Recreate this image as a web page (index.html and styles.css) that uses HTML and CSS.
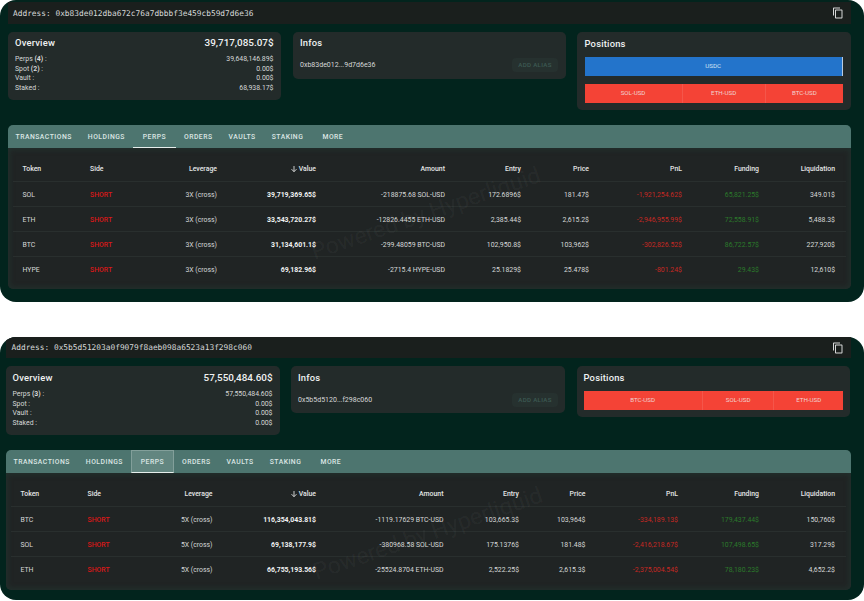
FILE: index.html
```html
<!DOCTYPE html>
<html lang="en">

<head>
    <meta charset="UTF-8">
    <meta name="viewport" content="width=device-width, initial-scale=1.0">
    <title>Address Explorer</title>
    <link rel="stylesheet" href="styles.css">
</head>

<body>
    <section class="account first">
        <header class="address-bar">
            <span class="address">Address: 0xb83de012dba672c76a7dbbbf3e459cb59d7d6e36</span>
            <svg class="copy" viewBox="0 0 24 24"><path d="M16 1H4c-1.1 0-2 .9-2 2v14h2V3h12V1zm3 4H8c-1.1 0-2 .9-2 2v14c0 1.1.9 2 2 2h11c1.1 0 2-.9 2-2V7c0-1.1-.9-2-2-2zm0 16H8V7h11v14z"/></svg>
        </header>

        <div class="cards">
            <div class="card overview">
                <div class="title"><span>Overview</span><span class="total">39,717,085.07$</span></div>
                <div class="line"><span>Perps <b>(4)</b> :</span><span>39,648,146.89$</span></div>
                <div class="line"><span>Spot <b>(2)</b> :</span><span>0.00$</span></div>
                <div class="line"><span>Vault :</span><span>0.00$</span></div>
                <div class="line"><span>Staked :</span><span>68,938.17$</span></div>
            </div>
            <div class="card infos">
                <div class="title">Infos</div>
                <div class="alias"><span>0xb83de012...9d7d6e36</span><button>ADD ALIAS</button></div>
            </div>
            <div class="card positions">
                <div class="title">Positions</div>
                <div class="bar spot"><span>USDC</span></div>
                <div class="bar perps">
                    <span style="flex-grow: 98">SOL-USD</span>
                    <span style="flex-grow: 83">ETH-USD</span>
                    <span style="flex-grow: 78">BTC-USD</span>
                </div>
            </div>
        </div>

        <nav class="tabs">
            <a>TRANSACTIONS</a>
            <a>HOLDINGS</a>
            <a class="active">PERPS</a>
            <a>ORDERS</a>
            <a>VAULTS</a>
            <a>STAKING</a>
            <a>MORE</a>
        </nav>
        <div class="panel">
            <div class="watermark">Powered by Hyperliquid</div>
            <table>
                <thead>
                    <tr><th>Token</th><th>Side</th><th>Leverage</th><th><svg class="sort" viewBox="0 0 24 24"><path d="M12 3v17M4.5 12.5L12 20l7.5-7.5"/></svg>Value</th><th>Amount</th><th>Entry</th><th>Price</th><th>PnL</th><th>Funding</th><th>Liquidation</th></tr>
                </thead>
                <tbody>
                    <tr><td>SOL</td><td class="short">SHORT</td><td>3X (cross)</td><td class="value">39,719,369.65$</td><td>-218875.68 SOL-USD</td><td>172.6896$</td><td>181.47$</td><td class="loss">-1,921,254.62$</td><td class="gain">65,821.25$</td><td>349.01$</td></tr>
                    <tr><td>ETH</td><td class="short">SHORT</td><td>3X (cross)</td><td class="value">33,543,720.27$</td><td>-12826.4455 ETH-USD</td><td>2,385.44$</td><td>2,615.2$</td><td class="loss">-2,946,955.99$</td><td class="gain">72,558.91$</td><td>5,488.3$</td></tr>
                    <tr><td>BTC</td><td class="short">SHORT</td><td>3X (cross)</td><td class="value">31,134,601.1$</td><td>-299.48059 BTC-USD</td><td>102,950.8$</td><td>103,962$</td><td class="loss">-302,826.52$</td><td class="gain">86,722.57$</td><td>227,920$</td></tr>
                    <tr><td>HYPE</td><td class="short">SHORT</td><td>3X (cross)</td><td class="value">69,182.96$</td><td>-2715.4 HYPE-USD</td><td>25.1829$</td><td>25.478$</td><td class="loss">-801.24$</td><td class="gain">29.43$</td><td>12,610$</td></tr>
                </tbody>
            </table>
        </div>
    </section>

    <section class="account second">
        <header class="address-bar">
            <span class="address">Address: 0x5b5d51203a0f9079f8aeb098a6523a13f298c060</span>
            <svg class="copy" viewBox="0 0 24 24"><path d="M16 1H4c-1.1 0-2 .9-2 2v14h2V3h12V1zm3 4H8c-1.1 0-2 .9-2 2v14c0 1.1.9 2 2 2h11c1.1 0 2-.9 2-2V7c0-1.1-.9-2-2-2zm0 16H8V7h11v14z"/></svg>
        </header>

        <div class="cards">
            <div class="card overview">
                <div class="title"><span>Overview</span><span class="total">57,550,484.60$</span></div>
                <div class="line"><span>Perps <b>(3)</b> :</span><span>57,550,484.60$</span></div>
                <div class="line"><span>Spot :</span><span>0.00$</span></div>
                <div class="line"><span>Vault :</span><span>0.00$</span></div>
                <div class="line"><span>Staked :</span><span>0.00$</span></div>
            </div>
            <div class="card infos">
                <div class="title">Infos</div>
                <div class="alias"><span>0x5b5d5120...f298c060</span><button>ADD ALIAS</button></div>
            </div>
            <div class="card positions">
                <div class="title">Positions</div>
                <div class="bar perps">
                    <span style="flex-grow: 119">BTC-USD</span>
                    <span style="flex-grow: 71">SOL-USD</span>
                    <span style="flex-grow: 69">ETH-USD</span>
                </div>
            </div>
        </div>

        <nav class="tabs">
            <a>TRANSACTIONS</a>
            <a>HOLDINGS</a>
            <a class="active focused">PERPS</a>
            <a>ORDERS</a>
            <a>VAULTS</a>
            <a>STAKING</a>
            <a>MORE</a>
        </nav>
        <div class="panel">
            <div class="watermark">Powered by Hyperliquid</div>
            <table>
                <thead>
                    <tr><th>Token</th><th>Side</th><th>Leverage</th><th><svg class="sort" viewBox="0 0 24 24"><path d="M12 3v17M4.5 12.5L12 20l7.5-7.5"/></svg>Value</th><th>Amount</th><th>Entry</th><th>Price</th><th>PnL</th><th>Funding</th><th>Liquidation</th></tr>
                </thead>
                <tbody>
                    <tr><td>BTC</td><td class="short">SHORT</td><td>5X (cross)</td><td class="value">116,354,043.81$</td><td>-1119.17629 BTC-USD</td><td>103,665.3$</td><td>103,964$</td><td class="loss">-334,189.13$</td><td class="gain">179,437.44$</td><td>150,760$</td></tr>
                    <tr><td>SOL</td><td class="short">SHORT</td><td>5X (cross)</td><td class="value">69,138,177.9$</td><td>-380968.58 SOL-USD</td><td>175.1376$</td><td>181.48$</td><td class="loss">-2,416,218.67$</td><td class="gain">107,498.65$</td><td>317.29$</td></tr>
                    <tr><td>ETH</td><td class="short">SHORT</td><td>5X (cross)</td><td class="value">66,755,193.56$</td><td>-25524.8704 ETH-USD</td><td>2,522.25$</td><td>2,615.3$</td><td class="loss">-2,375,004.54$</td><td class="gain">78,180.23$</td><td>4,652.2$</td></tr>
                </tbody>
            </table>
        </div>
    </section>
</body>

</html>
```
FILE: styles.css
```css
* {
    box-sizing: border-box;
}

body {
    margin: 0;
    height: 601px;
    overflow: hidden;
    background: #fff;
    color: #d6d8d8;
    font-family: Roboto, sans-serif;
    font-size: 6.9px;
}

.account {
    height: 302px;
    padding: 2px 13px 0 7.5px;
    border-radius: 16px;
    background: #02241d;
    overflow: hidden;
}

.second {
    height: 263px;
    margin-top: 35px;
    padding: 0 13.5px 0 5.5px;
}

.address-bar {
    display: flex;
    align-items: center;
    justify-content: space-between;
    height: 22px;
    padding: 0 7px 0 5.5px;
    background: #1a1f1d;
}

.second .address-bar {
    height: 21px;
    padding-left: 6px;
}

.address {
    font-family: "DejaVu Sans Mono", monospace;
    font-size: 7.83px;
    white-space: pre;
}

.copy {
    width: 12px;
    height: 12px;
    fill: #d6d8d8;
}

/* Cards */
.cards {
    display: grid;
    grid-template-columns: 273.5px 273px 273.5px;
    column-gap: 11.5px;
    align-items: start;
    height: 93px;
    margin-top: 8px;
}

.second .cards {
    grid-template-columns: 274px 274px 273.5px;
    height: 84px;
}

.card {
    height: 68px;
    padding: 5px 7.5px;
    border-radius: 5px;
    background: #232b2a;
}

.second .overview {
    height: 69px;
}

.infos {
    height: 47px;
}

.positions {
    height: 78px;
    padding-top: 6px;
}

.second .card {
    padding: 6px 7px;
}

.second .positions {
    height: 51px;
}

.title {
    display: flex;
    justify-content: space-between;
    height: 12px;
    color: #f0f2f2;
    font-size: 9.4px;
    font-weight: 500;
    line-height: 12px;
    letter-spacing: 0.2px;
}

.total {
    font-size: 9.9px;
    letter-spacing: 0;
}

.line {
    display: flex;
    justify-content: space-between;
    line-height: 9.6px;
}

.title + .line {
    margin-top: 6px;
}

.alias {
    display: flex;
    align-items: center;
    justify-content: space-between;
    height: 14px;
    margin-top: 9px;
    font-size: 7px;
}

.alias button {
    width: 46px;
    height: 14px;
    padding: 0;
    border: 0;
    border-radius: 4px;
    background: #26312f;
    color: #3d5a53;
    font-family: inherit;
    font-size: 6.2px;
    font-weight: 500;
    letter-spacing: 0.3px;
}

.bar {
    display: flex;
    height: 19px;
    margin-top: 8px;
    color: #f0d4d0;
    font-size: 6.2px;
    line-height: 19px;
    text-align: center;
}

.title + .bar {
    margin-top: 7px;
}

.bar span {
    flex: 1 1 0;
}

.bar span + span {
    border-left: 1px solid #f4564a;
}

.spot {
    border-right: 1px solid #b8cbe0;
    background: #2374cb;
    color: #d4e3f3;
}

.perps {
    background: #f44336;
}

/* Tabs */
.tabs {
    display: flex;
    height: 23px;
    border-radius: 5px 5px 0 0;
    background: #4d756f;
    overflow: hidden;
}

.tabs a {
    min-width: 43px;
    padding: 0 8px;
    color: #dce6e4;
    font-size: 6.8px;
    font-weight: 500;
    line-height: 24px;
    letter-spacing: 0.5px;
    text-align: center;
}

.tabs .active {
    border-bottom: 1px solid #e6eeec;
}

.tabs .focused {
    border: 1px solid #829f9a;
    border-bottom-color: #e6eeec;
    background: #628680;
    line-height: 22px;
}

/* Positions table */
.panel {
    position: relative;
    height: 141px;
    padding: 8px 5px 0;
    border-radius: 0 0 5px 5px;
    background: #202424;
    box-shadow: inset 0 0 5px 2px #222f2c;
}

.second .panel {
    height: 117px;
}

table {
    display: block;
}

thead,
tbody {
    display: block;
}

tr {
    display: grid;
    grid-template-columns: 67.5px 60px 67px 99px 129px 76px 68px 93px 77px 76px;
    height: 24.9px;
    padding-left: 10px;
    border-bottom: 1px solid #292f2e;
    line-height: 26.5px;
}

.second tr {
    grid-template-columns: 67px 60px 65px 103.5px 127.5px 75.5px 66.5px 92.5px 81px 76px;
}

thead tr {
    height: 26px;
}

tbody tr:last-child {
    border-bottom: 0;
}

th,
td {
    padding: 0;
    text-align: right;
    white-space: nowrap;
}

th {
    color: #e4e6e6;
    font-weight: 500;
    line-height: 26px;
}

th:nth-child(-n+2),
td:nth-child(-n+2) {
    text-align: left;
}

.sort {
    width: 8px;
    height: 8px;
    margin-right: 1px;
    fill: none;
    stroke: #e4e6e6;
    stroke-width: 2.6;
    vertical-align: -2px;
}

.value {
    color: #f0f2f2;
    font-weight: 700;
}

.short {
    color: #d81818;
    font-weight: 500;
}

.loss {
    color: #c62823;
}

.gain {
    color: #2b7a2b;
}

.watermark {
    position: absolute;
    top: 51px;
    left: 288px;
    width: 260px;
    color: rgba(255, 255, 255, 0.05);
    font-size: 23px;
    line-height: 30px;
    text-align: center;
    white-space: nowrap;
    transform: rotate(-19deg);
}

.second .watermark {
    top: 46px;
    left: 292px;
}
```
